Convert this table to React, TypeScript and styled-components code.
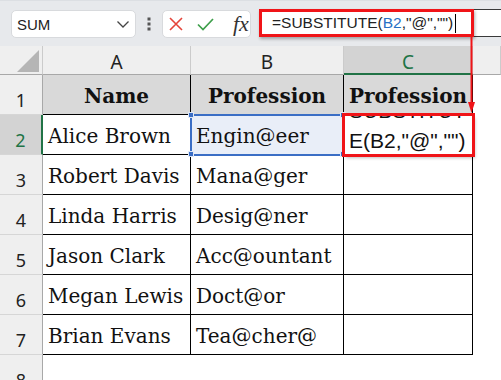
import React from 'react';
import styled, { createGlobalStyle, css } from 'styled-components';

const GlobalStyle = createGlobalStyle`
  html, body {
    margin: 0;
    padding: 0;
    background: #ffffff;
  }
  body {
    font-family: "Liberation Sans", Arial, sans-serif;
  }
  * {
    box-sizing: border-box;
  }
`;

const RED = '#f01418';
const GREEN = '#217346';
const BLUE = '#3b6ec5';

const Window = styled.div`
  position: relative;
  width: 501px;
  height: 380px;
  overflow: hidden;
  background: #ffffff;
`;

const Toolbar = styled.div`
  display: flex;
  align-items: flex-start;
  height: 46px;
  padding-top: 9px;
  background: #e7e9ec;
  border-top: 1px solid #dcdfe3;
`;

const Box = styled.div`
  height: 28px;
  background: #ffffff;
  border: 1px solid #d8dadd;
  border-radius: 5px;
  display: flex;
  align-items: center;
`;

const NameBox = styled(Box)`
  margin-left: 11px;
  width: 125px;
  padding: 0 6px 0 5px;
  justify-content: space-between;
  font-size: 15px;
  color: #222;
`;

const Dots = styled.svg`
  margin: 7px 11px 0 11px;
  flex: none;
`;

const ActionBox = styled(Box)`
  width: 89px;
  padding-left: 6px;
  gap: 14px;
`;

const Fx = styled.span`
  margin-left: 5px;
  font-family: "Liberation Serif", "Times New Roman", serif;
  font-style: italic;
  font-size: 22px;
  color: #333;
  line-height: 1;
`;

const FormulaInput = styled.div`
  flex: 1;
  margin-left: 8px;
  margin-top: -1px;
  margin-right: -4px;
  height: 28px;
  background: #ffffff;
  border: 1px solid #3a3a3a;
  display: flex;
`;

const FormulaHighlight = styled.div`
  width: 215px;
  height: 28px;
  margin: -1px 0 0 -1px;
  border: 3px solid ${RED};
  box-shadow: 1px 2px 3px rgba(0, 0, 0, 0.3);
  padding-left: 10px;
  display: flex;
  align-items: center;
  font-size: 15.5px;
  color: #222;
  white-space: nowrap;
`;

const Ref = styled.span`
  color: #2670c5;
`;

const Caret = styled.span`
  display: inline-block;
  width: 1px;
  height: 19px;
  margin-left: 2px;
  background: #000;
`;

const Sheet = styled.div`
  display: grid;
  grid-template-columns: 43px 148px 153px 129px 1fr;
  grid-template-rows: 29px repeat(8, 40px);
`;

const Corner = styled.div`
  background: #efefef;
  border-right: 1px solid #cbcbcb;
  border-bottom: 1px solid #a8a8a8;
  display: flex;
  align-items: flex-end;
  justify-content: flex-end;
  padding: 0 3px 2px 0;
`;

const ColHeader = styled.div<{ $selected?: boolean }>`
  background: ${p => (p.$selected ? '#d3d3d3' : '#efefef')};
  color: ${p => (p.$selected ? GREEN : '#222')};
  border-right: 1px solid #cbcbcb;
  border-bottom: ${p => (p.$selected ? `2px solid ${GREEN}` : '1px solid #a8a8a8')};
  font-family: "Noto Sans", "Open Sans", sans-serif;
  font-size: 19px;
  line-height: 28px;
  padding-top: 2px;
  text-align: center;
`;

const RowHeader = styled.div<{ $selected?: boolean }>`
  background: ${p => (p.$selected ? '#d3d3d3' : '#efefef')};
  color: ${p => (p.$selected ? GREEN : '#222')};
  border-right: ${p => (p.$selected ? `2px solid ${GREEN}` : '1px solid #a8a8a8')};
  border-bottom: 1px solid #d6d6d6;
  font-family: "Noto Sans", "Open Sans", sans-serif;
  font-size: 18px;
  line-height: 1;
  display: flex;
  align-items: flex-end;
  justify-content: center;
  padding-bottom: 5px;
`;

type Mark = 'range' | 'annotated' | undefined;

const Cell = styled.div<{ $head?: boolean; $empty?: boolean; $mark?: Mark }>`
  position: relative;
  display: flex;
  align-items: center;
  padding: 2px 0 0 5px;
  font-family: "DejaVu Serif", "Liberation Serif", serif;
  font-size: 20px;
  color: #111;
  white-space: nowrap;
  background: #ffffff;
  border-right: 1px solid #000;
  border-bottom: 1px solid #000;

  ${p =>
    p.$head &&
    css`
      background: #d9d9d9;
      font-weight: bold;
      justify-content: center;
      padding-left: 0;
    `}

  ${p =>
    p.$empty &&
    css`
      border: none;
    `}

  ${p =>
    p.$mark === 'range' &&
    css`
      background: #e9eef8;
      outline: 2px solid ${BLUE};
      outline-offset: -1px;
      z-index: 2;
    `}

  ${p =>
    p.$mark === 'annotated' &&
    css`
      z-index: 3;
      overflow: hidden;
      flex-direction: column;
      align-items: flex-start;
      justify-content: flex-end;
      gap: 1px;
      padding: 0 0 0 5px;
      outline: 3px solid ${RED};
      outline-offset: -1px;
      box-shadow: 2px 3px 3px rgba(0, 0, 0, 0.25);
    `}
`;

const Handle = styled.span<{ $x: 'left' | 'right'; $y: 'top' | 'bottom' }>`
  position: absolute;
  width: 6px;
  height: 6px;
  background: ${BLUE};
  border: 1px solid #dfe7f5;
  ${p => (p.$x === 'left' ? 'left: -3px;' : 'right: -3px;')}
  ${p => (p.$y === 'top' ? 'top: -3px;' : 'bottom: -3px;')}
`;

const EditLine = styled.div`
  font-family: "Liberation Sans", Arial, sans-serif;
  font-size: 21px;
  line-height: 29px;
  color: #111;
  &:last-child {
    margin-bottom: -1px;
  }
`;

const Arrow = styled.svg`
  position: absolute;
  left: 467px;
  top: 35px;
`;

const ChevronIcon = () => (
  <svg width="12" height="7" viewBox="0 0 12 7">
    <polyline points="0.5,0.5 6,6 11.5,0.5" fill="none" stroke="#444" strokeWidth="1.3" />
  </svg>
);

const CancelIcon = () => (
  <svg width="14" height="14" viewBox="0 0 14 14">
    <path d="M1 1 L13 13 M13 1 L1 13" stroke="#e5443a" strokeWidth="1.6" fill="none" />
  </svg>
);

const EnterIcon = () => (
  <svg width="17" height="13" viewBox="0 0 17 13">
    <polyline points="1,6.5 6,11.5 16,1" fill="none" stroke="#3e9f4b" strokeWidth="1.7" />
  </svg>
);

const rows: string[][] = [
  ['Name', 'Profession', 'Profession'],
  ['Alice Brown', 'Engin@eer', ''],
  ['Robert Davis', 'Mana@ger', ''],
  ['Linda Harris', 'Desig@ner', ''],
  ['Jason Clark', 'Acc@ountant', ''],
  ['Megan Lewis', 'Doct@or', ''],
  ['Brian Evans', 'Tea@cher@', ''],
];

export default function App() {
  return (
    <Window>
      <GlobalStyle />
      <Toolbar>
        <NameBox>
          <span>SUM</span>
          <ChevronIcon />
        </NameBox>
        <Dots width="4" height="14" viewBox="0 0 4 14">
          <rect x="0.5" y="0.5" width="3" height="3" fill="#555" />
          <rect x="0.5" y="5.5" width="3" height="3" fill="#555" />
          <rect x="0.5" y="10.5" width="3" height="3" fill="#555" />
        </Dots>
        <ActionBox>
          <CancelIcon />
          <EnterIcon />
          <Fx>fx</Fx>
        </ActionBox>
        <FormulaInput>
          <FormulaHighlight>
            =SUBSTITUTE(<Ref>B2</Ref>,"@","")
            <Caret />
          </FormulaHighlight>
        </FormulaInput>
      </Toolbar>

      <Sheet>
        <Corner>
          <svg width="22" height="22" viewBox="0 0 22 22">
            <polygon points="0,22 22,22 22,0" fill="#b5b5b5" />
          </svg>
        </Corner>
        <ColHeader>A</ColHeader>
        <ColHeader>B</ColHeader>
        <ColHeader $selected>C</ColHeader>
        <ColHeader />

        {rows.map((row, r) => (
          <React.Fragment key={r}>
            <RowHeader $selected={r === 1}>{r + 1}</RowHeader>
            {row.map((value, c) => {
              if (r === 1 && c === 1) {
                return (
                  <Cell key={c} $mark="range">
                    {value}
                    <Handle $x="left" $y="top" />
                    <Handle $x="right" $y="top" />
                    <Handle $x="left" $y="bottom" />
                    <Handle $x="right" $y="bottom" />
                  </Cell>
                );
              }
              if (r === 1 && c === 2) {
                return (
                  <Cell key={c} $mark="annotated">
                    <EditLine>SUBSTITUT</EditLine>
                    <EditLine>E(B2,"@","")</EditLine>
                  </Cell>
                );
              }
              return (
                <Cell key={c} $head={r === 0}>
                  {value}
                </Cell>
              );
            })}
            <Cell $empty />
          </React.Fragment>
        ))}

        <RowHeader>8</RowHeader>
        <Cell $empty />
        <Cell $empty />
        <Cell $empty />
        <Cell $empty />
      </Sheet>

      <Arrow width="10" height="79" viewBox="0 0 10 79">
        <line x1="4.5" y1="0" x2="4.5" y2="70" stroke={RED} strokeWidth="2" />
        <polygon points="1,67 8,67 4.5,78" fill={RED} />
      </Arrow>
    </Window>
  );
}
